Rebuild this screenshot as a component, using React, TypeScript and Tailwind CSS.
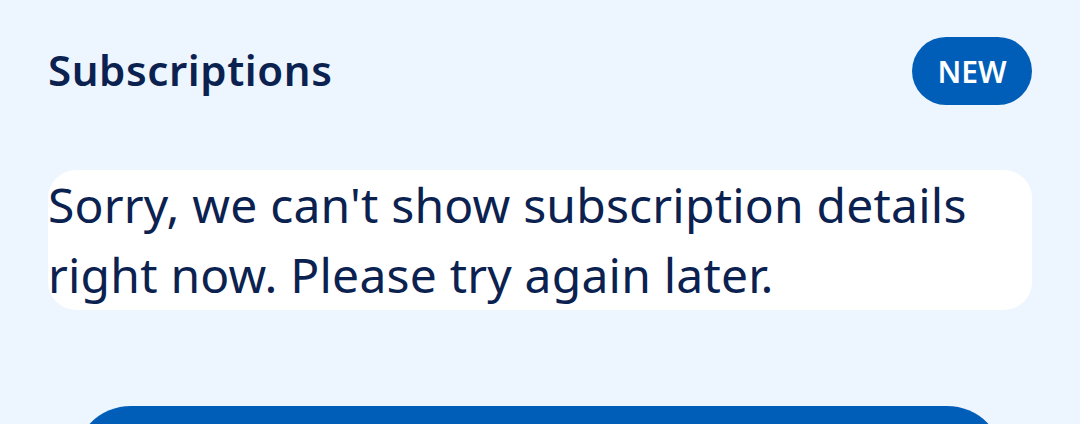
import React from 'react';

export default function App() {
  return (
    <div className="min-h-screen w-full bg-[#edf5fe] font-['Noto_Sans',sans-serif] text-[#0b2250] overflow-hidden">
      <div className="px-12 pt-[37px]">
        <header className="flex justify-between items-center h-[68px]">
          <h2 className="text-[42px] font-semibold leading-none tracking-[0.6px] pb-[2px]">Subscriptions</h2>
          <span className="h-[68px] w-[120px] rounded-full bg-[#005eb8] text-white text-[30px] font-semibold flex items-center justify-center">
            NEW
          </span>
        </header>

        <div className="mt-[65px] bg-white rounded-[28px] h-[140px]">
          <p className="text-[48px] leading-[70px] tracking-[0.2px]">
            Sorry, we can't show subscription details right now. Please try again later.
          </p>
        </div>

        <div className="mt-[96px] pl-[26px] pr-[28px]">
          <button className="w-full h-[114px] rounded-full bg-[#005eb8]"></button>
        </div>
      </div>
    </div>
  );
}
